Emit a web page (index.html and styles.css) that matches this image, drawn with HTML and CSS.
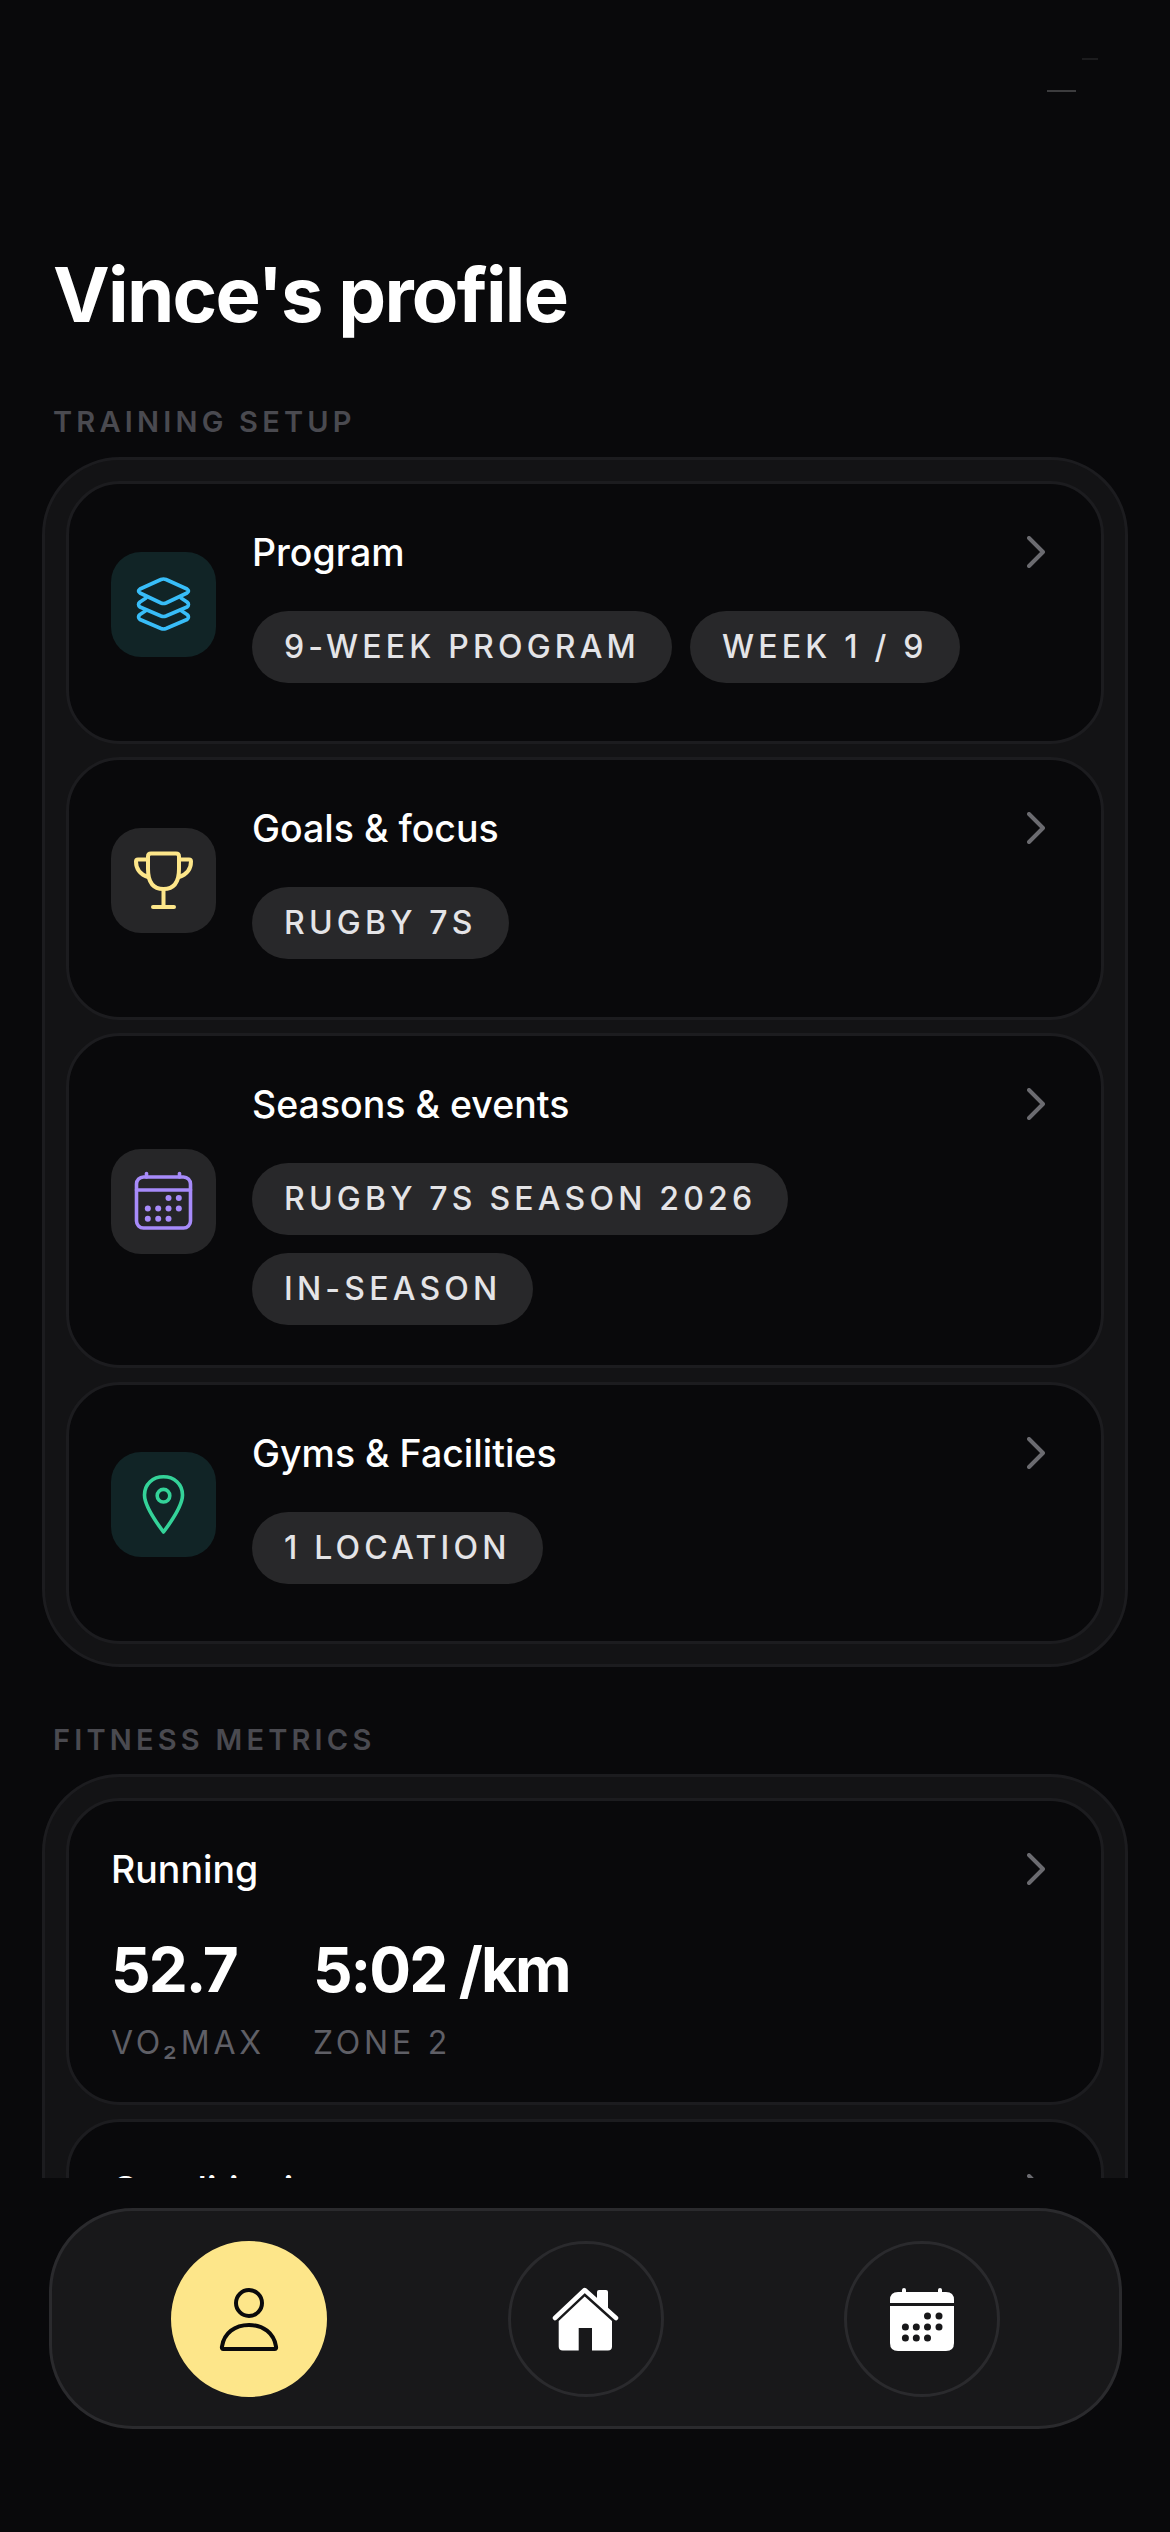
FILE: index.html
```html
<!DOCTYPE html>
<html lang="en">
<head>
    <meta charset="UTF-8">
    <meta name="viewport" content="width=device-width, initial-scale=1.0">
    <title>Vince's profile</title>
    <link rel="stylesheet" href="styles.css">
</head>
<body>

<div class="status-mark status-mark-a"></div>
<div class="status-mark status-mark-b"></div>

<main class="content">
    <h1>Vince's profile</h1>

    <h2 class="section-label">TRAINING SETUP</h2>
    <section class="panel">
        <a class="row">
            <div class="row-main">
                <div class="row-icon tint-teal">
                    <svg width="63" height="63" viewBox="0 0 63 63" fill="none" stroke="#38bdf8" stroke-width="3.6" stroke-linecap="round" stroke-linejoin="round">
                        <path d="M29 6.500 L8 16 Q5 18 8 20 L29 30 Q31.500 31 34 30 L55 20 Q58 18 55 16 L34 6.500 Q31.500 5.500 29 6.500 Z"/>
                        <path d="M14 25 L8 29 Q5 31.500 8 34 L29 43 Q31.500 44 34 43 L55 34 Q58 31.500 55 29 L49 25"/>
                        <path d="M14 37.500 L8 41.500 Q5 44 8 46.500 L29 55.500 Q31.500 56.500 34 55.500 L55 46.500 Q58 44 55 41.500 L49 37.500"/>
                    </svg>
                </div>
                <div class="row-body">
                    <div class="row-title">Program</div>
                    <div class="pills">
                        <span class="pill">9-WEEK PROGRAM</span>
                        <span class="pill">WEEK 1 / 9</span>
                    </div>
                </div>
            </div>
            <svg class="chevron" width="18" height="32" viewBox="0 0 18 32" fill="none" stroke="#6b6b70" stroke-width="4" stroke-linecap="round" stroke-linejoin="round"><path d="M2 2 L16 16 L2 30"/></svg>
        </a>

        <a class="row">
            <div class="row-main">
                <div class="row-icon tint-grey">
                    <svg width="63" height="63" viewBox="0 0 63 63" fill="none" stroke="#fde68a" stroke-width="4" stroke-linecap="round" stroke-linejoin="round">
                        <path d="M19 4.500 H44 Q47 4.500 47 7.500 V20 Q47 40 31.500 40 Q16 40 16 20 V7.500 Q16 4.500 19 4.500 Z"/>
                        <path d="M16 10.500 H6 Q4 10.500 4 12.500 Q4 24 16 28"/>
                        <path d="M47 10.500 H57 Q59 10.500 59 12.500 Q59 24 47 28"/>
                        <path d="M31.500 40 V58"/>
                        <path d="M21 58 H42"/>
                    </svg>
                </div>
                <div class="row-body">
                    <div class="row-title">Goals &amp; focus</div>
                    <div class="pills">
                        <span class="pill">RUGBY 7S</span>
                    </div>
                </div>
            </div>
            <svg class="chevron" width="18" height="32" viewBox="0 0 18 32" fill="none" stroke="#6b6b70" stroke-width="4" stroke-linecap="round" stroke-linejoin="round"><path d="M2 2 L16 16 L2 30"/></svg>
        </a>

        <a class="row">
            <div class="row-main">
                <div class="row-icon tint-grey">
                    <svg width="63" height="63" viewBox="0 0 63 63" fill="none" stroke="#a78bfa" stroke-width="3.600" stroke-linecap="round">
                        <rect x="4.500" y="7" width="54" height="51" rx="7"/>
                        <path d="M4.500 20 H58.500"/>
                        <path d="M14.500 3.500 V7"/>
                        <path d="M47.500 3.500 V7"/>
                        <g fill="#a78bfa" stroke="none">
                            <circle cx="36.500" cy="28" r="3"/><circle cx="46.800" cy="28" r="3"/>
                            <circle cx="15.800" cy="38.400" r="3"/><circle cx="26.200" cy="38.400" r="3"/><circle cx="36.500" cy="38.400" r="3"/><circle cx="46.800" cy="38.400" r="3"/>
                            <circle cx="15.800" cy="48.700" r="3"/><circle cx="26.200" cy="48.700" r="3"/><circle cx="36.500" cy="48.700" r="3"/>
                        </g>
                    </svg>
                </div>
                <div class="row-body">
                    <div class="row-title">Seasons &amp; events</div>
                    <div class="pills">
                        <span class="pill">RUGBY 7S SEASON 2026</span>
                        <span class="pill">IN-SEASON</span>
                    </div>
                </div>
            </div>
            <svg class="chevron" width="18" height="32" viewBox="0 0 18 32" fill="none" stroke="#6b6b70" stroke-width="4" stroke-linecap="round" stroke-linejoin="round"><path d="M2 2 L16 16 L2 30"/></svg>
        </a>

        <a class="row">
            <div class="row-main">
                <div class="row-icon tint-teal">
                    <svg width="63" height="63" viewBox="0 0 63 63" fill="none" stroke="#34d399" stroke-width="3.600" stroke-linejoin="round">
                        <path d="M31.500 59 C24 49 12.500 33 12.500 22 C12.500 11 21 3.800 31.500 3.800 C42 3.800 50.500 11 50.500 22 C50.500 33 39 49 31.500 59 Z"/>
                        <circle cx="31.500" cy="22.700" r="6.300"/>
                    </svg>
                </div>
                <div class="row-body">
                    <div class="row-title">Gyms &amp; Facilities</div>
                    <div class="pills">
                        <span class="pill">1 LOCATION</span>
                    </div>
                </div>
            </div>
            <svg class="chevron" width="18" height="32" viewBox="0 0 18 32" fill="none" stroke="#6b6b70" stroke-width="4" stroke-linecap="round" stroke-linejoin="round"><path d="M2 2 L16 16 L2 30"/></svg>
        </a>
    </section>

    <h2 class="section-label section-label-next">FITNESS METRICS</h2>
    <section class="panel">
        <a class="row row-metric">
            <div class="row-main">
                <div class="row-body">
                    <div class="row-title">Running</div>
                    <div class="metrics">
                        <div class="metric">
                            <div class="metric-value">52.7</div>
                            <div class="metric-label">VO₂MAX</div>
                        </div>
                        <div class="metric">
                            <div class="metric-value">5:02 /km</div>
                            <div class="metric-label">ZONE 2</div>
                        </div>
                    </div>
                </div>
            </div>
            <svg class="chevron" width="18" height="32" viewBox="0 0 18 32" fill="none" stroke="#6b6b70" stroke-width="4" stroke-linecap="round" stroke-linejoin="round"><path d="M2 2 L16 16 L2 30"/></svg>
        </a>
        <a class="row row-metric">
            <div class="row-main">
                <div class="row-body">
                    <div class="row-title">Conditioning</div>
                </div>
            </div>
            <svg class="chevron" width="18" height="32" viewBox="0 0 18 32" fill="none" stroke="#6b6b70" stroke-width="4" stroke-linecap="round" stroke-linejoin="round"><path d="M2 2 L16 16 L2 30"/></svg>
        </a>
    </section>
</main>

<nav class="tabbar">
    <div class="tab tab-active">
        <svg width="60" height="63" viewBox="0 0 60 63" fill="none" stroke="#0a0a0c" stroke-width="4" stroke-linejoin="round">
            <ellipse cx="30" cy="15" rx="13" ry="13"/>
            <path d="M4 61 Q2.500 61 3 58.500 C5 45 16 37 30 37 C44 37 55 45 57 58.500 Q57.500 61 56 61 Z"/>
        </svg>
    </div>
    <div class="tab">
        <svg width="67" height="64" viewBox="0 0 67 64" fill="#ffffff">
            <path d="M45 5 Q45 3 47 3 H54 Q56 3 56 5 V22 L45 12 Z"/>
            <path d="M32.700 9.500 L60 34 V59.500 Q60 63.500 56 63.500 H40 V41 H26.700 V63.500 H10.700 Q6.700 63.500 6.700 59.500 V34 Z"/>
            <path d="M3 31 L32.700 3 L64 31" fill="none" stroke="#ffffff" stroke-width="4.500" stroke-linecap="round" stroke-linejoin="round"/>
        </svg>
    </div>
    <div class="tab">
        <svg width="64" height="63" viewBox="0 0 64 63" fill="#ffffff">
            <path d="M8 4 H56 Q64 4 64 12 V15 H0 V12 Q0 4 8 4 Z"/>
            <rect x="12" y="0" width="4" height="7" rx="2"/>
            <rect x="48" y="0" width="4" height="7" rx="2"/>
            <path d="M0 18 H64 V55 Q64 63 56 63 H8 Q0 63 0 55 Z"/>
            <g fill="#18181a">
                <circle cx="37.500" cy="28" r="3.500"/><circle cx="49" cy="28" r="3.500"/>
                <circle cx="15.400" cy="39" r="3.500"/><circle cx="26.300" cy="39" r="3.500"/><circle cx="37.500" cy="39" r="3.500"/><circle cx="49" cy="39" r="3.500"/>
                <circle cx="15.400" cy="50" r="3.500"/><circle cx="26.300" cy="50" r="3.500"/><circle cx="37.500" cy="50" r="3.500"/>
            </g>
        </svg>
    </div>
</nav>

</body>
</html>
```

FILE: styles.css
```css
* {
    box-sizing: border-box;
}

html, body {
    margin: 0;
    height: 2532px;
    overflow: hidden;
}

body {
    position: relative;
    background: #09090b;
    font-family: Inter, "Liberation Sans", sans-serif;
    color: #ffffff;
}

.status-mark {
    position: absolute;
    height: 2px;
}

.status-mark-a {
    left: 1047px;
    top: 90px;
    width: 29px;
    background: #3c3c3e;
}

.status-mark-b {
    left: 1082px;
    top: 58px;
    width: 16px;
    background: #1c1c1e;
}

.content {
    height: 2178px;
    overflow: hidden;
    padding: 249px 42px 0;
}

h1 {
    margin: 0 0 0 11px;
    font-size: 76px;
    line-height: 90px;
    font-weight: 700;
    letter-spacing: -1.7px;
}

.section-label {
    margin: 65px 0 17px 11px;
    font-size: 29px;
    line-height: 36px;
    font-weight: 600;
    letter-spacing: 4.2px;
    color: #4a4a50;
}

.section-label-next {
    margin-top: 55px;
    margin-bottom: 16px;
}

.panel {
    display: flex;
    flex-direction: column;
    gap: 13.5px;
    padding: 21px 21px 20px;
    background: #131315;
    border: 3px solid #1c1c1f;
    border-radius: 78px;
}

.row {
    display: flex;
    align-items: flex-start;
    min-height: 262.5px;
    padding: 41px 56px 40px 42px;
    background: #09090b;
    border: 3px solid #1c1c1f;
    border-radius: 54px;
}

.row-main {
    flex: 1;
    min-width: 0;
    display: flex;
    align-items: center;
}

.row-icon {
    flex: none;
    display: flex;
    align-items: center;
    justify-content: center;
    width: 105px;
    height: 105px;
    margin-right: 36px;
    border-radius: 30px;
}

.tint-teal {
    background: #112426;
}

.tint-grey {
    background: #262628;
}

.row-body {
    flex: 1;
    min-width: 0;
}

.row-title {
    font-size: 37.5px;
    line-height: 56px;
    font-weight: 500;
}

.pills {
    display: flex;
    flex-wrap: wrap;
    gap: 18px;
    margin-top: 30px;
}

.pill {
    height: 72px;
    padding: 0 32px;
    border-radius: 36px;
    background: #28282a;
    color: #e4e4e7;
    font-size: 32px;
    line-height: 72px;
    font-weight: 500;
    letter-spacing: 4.2px;
}

.chevron {
    flex: none;
    margin-top: 11px;
}

.row-metric {
    padding-bottom: 39px;
}

.metrics {
    display: flex;
    gap: 48px;
    margin-top: 34px;
}

.metric-value {
    font-size: 62px;
    line-height: 76px;
    font-weight: 700;
    letter-spacing: -2px;
}

.metric-label {
    margin-top: 15px;
    font-size: 32px;
    line-height: 40px;
    letter-spacing: 3.8px;
    color: #5f5f66;
}

.tabbar {
    display: flex;
    justify-content: space-between;
    margin: 30px 48px 0 49px;
    height: 221px;
    padding: 30px 119px;
    background: #18181a;
    border: 3px solid #2a2a2d;
    border-radius: 84px;
}

.tab {
    display: flex;
    align-items: center;
    justify-content: center;
    width: 156px;
    height: 156px;
    border: 3px solid #2a2a2d;
    border-radius: 50%;
}

.tab-active {
    background: #fde68a;
    border-color: #fde68a;
}
```
